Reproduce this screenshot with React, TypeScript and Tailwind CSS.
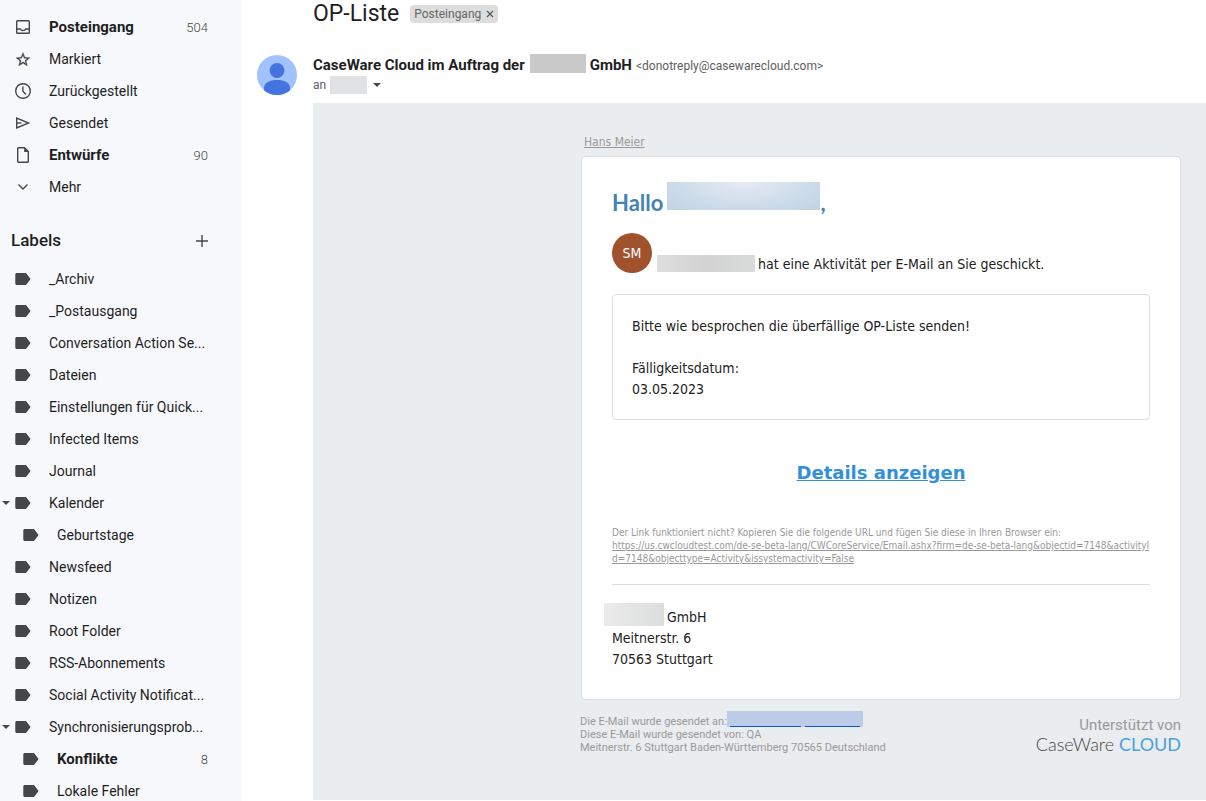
import type { ReactNode } from "react";

function Icon({ children }: { children: ReactNode }) {
  return (
    <svg viewBox="0 0 20 20" className="size-5 shrink-0" fill="none" stroke="#444746" strokeWidth="1.4" aria-hidden="true">
      {children}
    </svg>
  );
}

const InboxIcon = () => (
  <Icon>
    <rect x="3.7" y="3.7" width="12.6" height="12.6" rx="0.8" />
    <path d="M4 12h3.300c.4 1 1.400 1.600 2.700 1.600s2.300-.6 2.700-1.600H16" />
  </Icon>
);

const StarIcon = () => (
  <Icon>
    <path
      strokeWidth="0.3"
      fill="#444746"
      d="M17 8.740l-5.030-.440L10 3.400 8.030 8.310 3 8.740l3.820 3.310L5.670 17 10 14.370 14.330 17l-1.140-4.950L17 8.740zM10 12.850l-2.630 1.590.7-3-2.320-2.010 3.060-.270L10 6.350l1.200 2.820 3.060.270-2.320 2.010.7 3L10 12.850z"
    />
  </Icon>
);

const ClockIcon = () => (
  <Icon>
    <circle cx="10" cy="10" r="7.3" />
    <path d="M9.900 5.500v4.700l3.100 3.200" />
  </Icon>
);

const SendIcon = () => (
  <Icon>
    <path d="M3.700 5.100v9.800L15.600 10 3.700 5.100z" />
    <path d="M4 10h4.500" />
  </Icon>
);

const DraftIcon = () => (
  <Icon>
    <path d="M5.600 2.700h5.900l3.800 3.800v9.900c0 .5-.4.900-.9.900H5.600c-.5 0-.9-.4-.9-.9V3.600c0-.5.4-.9.900-.9z" />
    <path d="M11.200 2.500v4.400h4.300z" fill="#444746" stroke="none" />
  </Icon>
);

const MoreIcon = () => (
  <Icon>
    <path d="M5.500 7.500l4.500 4.500 4.500-4.500" />
  </Icon>
);

const LabelIcon = () => (
  <Icon>
    <path
      stroke="none"
      fill="#444746"
      d="M3.800 4h8.400c.6 0 1.100.3 1.400.7L17.600 10l-4 5.300c-.3.4-.8.700-1.400.7H3.800c-.9 0-1.500-.6-1.500-1.500v-9C2.300 4.600 2.900 4 3.800 4z"
    />
  </Icon>
);

const Caret = () => (
  <svg viewBox="0 0 8 4" className="h-1 w-2 shrink-0" aria-hidden="true">
    <path d="M0 0h8L4 4z" fill="#444746" />
  </svg>
);

type Entry = { name: string; count?: number; icon?: ReactNode; child?: boolean; open?: boolean };

const folders: Entry[] = [
  { name: "Posteingang", count: 504, icon: <InboxIcon /> },
  { name: "Markiert", icon: <StarIcon /> },
  { name: "Zurückgestellt", icon: <ClockIcon /> },
  { name: "Gesendet", icon: <SendIcon /> },
  { name: "Entwürfe", count: 90, icon: <DraftIcon /> },
  { name: "Mehr", icon: <MoreIcon /> },
];

const labels: Entry[] = [
  { name: "_Archiv" },
  { name: "_Postausgang" },
  { name: "Conversation Action Se..." },
  { name: "Dateien" },
  { name: "Einstellungen für Quick..." },
  { name: "Infected Items" },
  { name: "Journal" },
  { name: "Kalender", open: true },
  { name: "Geburtstage", child: true },
  { name: "Newsfeed" },
  { name: "Notizen" },
  { name: "Root Folder" },
  { name: "RSS-Abonnements" },
  { name: "Social Activity Notificat..." },
  { name: "Synchronisierungsprob...", open: true },
  { name: "Konflikte", child: true, count: 8 },
  { name: "Lokale Fehler", child: true },
];

function Row({ name, count, icon, child, open }: Entry) {
  return (
    <li>
      <a href="#" className={`flex h-8 items-center pr-[33px] ${child ? "pl-2" : ""}`}>
        <span className="flex w-3 shrink-0 justify-end pr-0.5">{open && <Caret />}</span>
        <span className="ml-px mr-4 shrink-0">{icon ?? <LabelIcon />}</span>
        <span className={`flex-1 whitespace-nowrap ${count ? "text-[15px] font-bold" : "text-sm"}`}>{name}</span>
        {count && <span className="pt-0.5 text-[13px] font-light text-[#444746]">{count}</span>}
      </a>
    </li>
  );
}

function Sidebar() {
  return (
    <nav className="w-[241px] shrink-0 bg-[#f6f8fc] pt-[11px]" aria-label="Ordner">
      <ul>
        {folders.map((f) => (
          <Row key={f.name} {...f} />
        ))}
      </ul>
      <div className="flex h-[60px] items-center justify-between pl-[11px] pr-[33px] pt-4">
        <h2 className="text-[17px] font-medium">Labels</h2>
        <button type="button" aria-label="Neues Label erstellen" className="-mr-1">
          <Icon>
            <path d="M10 4v12M4 10h12" />
          </Icon>
        </button>
      </div>
      <ul>
        {labels.map((l) => (
          <Row key={l.name} {...l} />
        ))}
      </ul>
    </nav>
  );
}

function Header() {
  return (
    <header className="pl-4">
      <div className="flex h-7 items-center gap-[11px] pl-14">
        <h1 className="text-[23px] leading-7 text-[#1f1f1f]">OP-Liste</h1>
        <span className="flex h-[18px] items-center gap-[5px] rounded bg-[#ddd] px-1 text-xs text-[#666]">
          Posteingang
          <button type="button" aria-label="Posteingang entfernen">
            <svg viewBox="0 0 8 8" className="size-2" stroke="#555" strokeWidth="1.2" aria-hidden="true">
              <path d="M1 1l6 6M7 1L1 7" />
            </svg>
          </button>
        </span>
      </div>
      <div className="flex h-[75px] gap-4 pt-[25px]">
        <svg viewBox="0 0 40 40" className="mt-0.5 size-10 shrink-0" role="img" aria-label="Absender">
          <clipPath id="round">
            <circle cx="20" cy="20" r="20" />
          </clipPath>
          <g clipPath="url(#round)">
            <rect width="40" height="40" fill="#a0c3ff" />
            <circle cx="20" cy="15.500" r="7.400" fill="#4374e0" />
            <path d="M7 40v-7c0-5.500 6-8 13-8s13 2.500 13 8v7z" fill="#4374e0" />
          </g>
        </svg>
        <div>
          <div className="flex h-6 items-center whitespace-nowrap">
            <span className="text-[15px] font-bold">CaseWare Cloud im Auftrag der</span>
            <span className="-mt-1 ml-[5px] mr-1 h-[19px] w-14 bg-[#c9c9c9]" />
            <span className="text-[15px] font-bold">GmbH</span>
            <span className="ml-1 pt-0.5 text-xs text-[#5e5e5e]">&lt;donotreply@casewarecloud.com&gt;</span>
          </div>
          <div className="-mt-px flex h-[18px] items-center text-xs text-[#5e5e5e]">
            an
            <span className="ml-1 h-[18px] w-[37px] bg-[#e1e2e3]" />
            <button type="button" aria-label="Details einblenden" className="ml-1.5">
              <Caret />
            </button>
          </div>
        </div>
      </div>
    </header>
  );
}

function Mail() {
  return (
    <div className="flex flex-1 justify-end bg-[#e9edf0] pr-[25px] pt-[30px] font-['DejaVu_Sans_Condensed','DejaVu_Sans',sans-serif]">
      <div className="w-[600px]">
        <a href="#" className="ml-[3px] block w-fit text-xs leading-[18px] text-[#999] underline">
          Hans Meier
        </a>
        <article className="mt-[5px] rounded border border-[#ddd] bg-white px-[30px] pb-[29px] pt-[25px] text-sm leading-[21px] text-[#222]">
          <h2 className="flex h-10 items-center font-[Lato,sans-serif] text-[22px] font-bold text-[#4682b4]">
            Hallo
            <span className="-mt-3 ml-1 h-7 w-[153px] bg-[radial-gradient(ellipse_at_50%_0%,#e4ebf3,#bfd2e3)]" />,
          </h2>
          <div className="mt-[11px] flex h-10">
            <span className="flex size-10 shrink-0 items-center justify-center rounded-full bg-[#a0522d] text-white">SM</span>
            <span className="ml-[5px] mr-[3px] mt-[22px] h-[17px] w-[98px] bg-linear-to-r from-[#dedede] via-[#d3d3d3] to-[#d9dadb]" />
            <p className="mt-[21px] whitespace-nowrap">hat eine Aktivität per E-Mail an Sie geschickt.</p>
          </div>
          <section className="mt-[21px] rounded border border-[#ddd] px-[19px] pb-[19px] pt-[21px]">
            <p>Bitte wie besprochen die überfällige OP-Liste senden!</p>
            <p className="mt-[21px]">Fälligkeitsdatum:</p>
            <p>03.05.2023</p>
          </section>
          <p className="mt-[41px] text-center">
            <a href="#" className="font-['DejaVu_Sans',sans-serif] text-lg font-bold leading-6 text-[#318fdb] underline">
              Details anzeigen
            </a>
          </p>
          <div className="mt-[41px] text-[10px] leading-[13px] text-[#999]">
            <p>Der Link funktioniert nicht? Kopieren Sie die folgende URL und fügen Sie diese in Ihren Browser ein:</p>
            <a href="#" className="break-all underline">
              https://us.cwcloudtest.com/de-se-beta-lang/CWCoreService/Email.ashx?firm=de-se-beta-lang&amp;objectid=7148&amp;activityId=7148&amp;objecttype=Activity&amp;issystemactivity=False
            </a>
          </div>
          <hr className="mt-[19px] border-[#ddd]" />
          <address className="mt-[22px] not-italic">
            <div className="flex h-[21px]">
              <span className="-ml-2 -mt-1 mr-[3px] h-[23px] w-[60px] bg-linear-to-r from-[#ebebeb] to-[#dcdddd]" />
              GmbH
            </div>
            <div>Meitnerstr. 6</div>
            <div>70563 Stuttgart</div>
          </address>
        </article>
        <footer className="-ml-px flex justify-between pt-[15px] font-[Roboto,sans-serif] text-[11px] leading-[13px] text-[#999]">
          <div>
            <div className="flex h-[13px]">
              Die E-Mail wurde gesendet an:
              <a href="#" aria-label="Empfänger" className="-mt-1 flex h-4 w-[136px] items-end gap-1 bg-[#bccbe8] px-[3px]">
                <span className="h-px flex-1 bg-[#1155cc]" />
                <span className="h-px w-[55px] bg-[#1155cc]" />
              </a>
            </div>
            <div>Diese E-Mail wurde gesendet von: QA</div>
            <div>Meitnerstr. 6 Stuttgart Baden-Württemberg 70565 Deutschland</div>
          </div>
          <div className="text-right">
            <div className="text-[15px] leading-5">Unterstützt von</div>
            <div className="font-[Lato,sans-serif] text-lg font-light leading-[18px] text-[#444]">
              CaseWare <span className="font-normal text-[#4f9fdc]">CLOUD</span>
            </div>
          </div>
        </footer>
      </div>
    </div>
  );
}

export default function App() {
  return (
    <div className="flex h-screen overflow-hidden bg-white font-[Roboto,sans-serif] text-[#1f1f1f]">
      <Sidebar />
      <main className="flex min-w-0 flex-1 flex-col pb-px">
        <Header />
        <div className="flex flex-1 pl-[72px]">
          <Mail />
        </div>
      </main>
    </div>
  );
}
